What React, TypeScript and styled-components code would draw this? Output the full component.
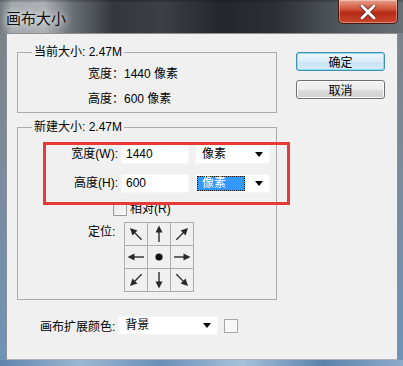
import styled, { createGlobalStyle } from "styled-components";

const Global = createGlobalStyle`
  html, body { margin: 0; padding: 0; background: #6f8fb2; }
  body { font-family: "Liberation Sans", "Noto Sans CJK SC", sans-serif; font-size: 12px; color: #000; }
  * { box-sizing: border-box; }
`;

const Window = styled.div`
  position: relative;
  width: 403px;
  height: 366px;
  display: flex;
  flex-direction: column;
  overflow: hidden;
`;

const TitleBar = styled.div`
  height: 33px;
  display: flex;
  justify-content: space-between;
  align-items: flex-start;
  background:
    linear-gradient(180deg, rgba(0,0,0,0.25) 0px, rgba(0,0,0,0) 3px),
    linear-gradient(90deg, #73797f 0%, #a4a9ad 3%, #adb1b5 11%, #6a6f74 18%, #34383c 28%, #3c4044 40%, #24282c 55%, #2b2f33 68%, #4d5257 82%, #6b7076 100%);
`;

const Title = styled.div`
  padding: 9px 0 0 6px;
  font-family: "Noto Sans CJK SC", sans-serif;
  font-size: 15px;
  line-height: 18px;
  color: #101010;
  text-shadow: 0 0 6px rgba(255,255,255,0.9), 0 0 10px rgba(255,255,255,0.6);
`;

const CloseButton = styled.div`
  width: 60px;
  height: 24px;
  margin-right: 5px;
  display: flex;
  align-items: center;
  justify-content: center;
  border: 1px solid #4a1a12;
  border-top: none;
  border-radius: 0 0 5px 5px;
  background: linear-gradient(180deg, #e8a08c 0%, #d0523a 40%, #b52a17 55%, #c9492c 100%);
  box-shadow: inset 0 0 0 1px rgba(255,255,255,0.35);
`;

const Frame = styled.div`
  flex: 1;
  display: flex;
`;

const SideBorder = styled.div<{ $w: number }>`
  width: ${(p) => p.$w}px;
  background: linear-gradient(180deg, #7c8289 0%, #7b8a9a 40%, #6f93b8 100%);
`;

const BottomBorder = styled.div`
  height: 6px;
  background: linear-gradient(90deg, #5f84ad 0%, #9db7d2 20%, #6a8fb6 40%, #a7c1da 60%, #5c82ab 80%, #8eaacb 100%);
`;

const Body = styled.div`
  flex: 1;
  display: flex;
  background: #f0f0f0;
  border: 1px solid #8a9096;
  border-bottom-color: #a9b3bd;
  padding: 10px 12px 0 10px;
`;

const LeftColumn = styled.div`
  width: 260px;
  display: flex;
  flex-direction: column;
`;

const RightColumn = styled.div`
  margin-left: 19px;
  padding-top: 8px;
  display: flex;
  flex-direction: column;
  gap: 9px;
`;

const Group = styled.fieldset<{ $gap?: number }>`
  margin: 0;
  margin-top: ${(p) => p.$gap ?? 0}px;
  padding: 0;
  border: 1px solid #acacac;
  min-width: 0;
`;

const Caption = styled.legend`
  margin-left: 14px;
  padding: 0 2px;
  line-height: 16px;
  font-size: 12px;
`;

const InfoList = styled.div`
  padding: 6px 0 5px 70px;
  display: flex;
  flex-direction: column;
  gap: 9px;
`;

const InfoLine = styled.div`
  line-height: 16px;
`;

const FieldGrid = styled.div`
  padding-top: 10px;
  display: grid;
  grid-template-columns: 100px 68px 75px;
  column-gap: 3px;
  row-gap: 10px;
  align-items: center;
`;

const FieldLabel = styled.div`
  text-align: right;
  line-height: 19px;
`;

const TextInput = styled.div`
  height: 19px;
  background: #fff;
  border: 1px solid #f6f6f6;
  padding: 0 4px;
  line-height: 17px;
`;

const Select = styled.div<{ $width: number }>`
  width: ${(p) => p.$width}px;
  height: 19px;
  background: #fff;
  border: 1px solid #f4f4f4;
  display: flex;
  align-items: center;
  justify-content: space-between;
  padding: 0 6px 0 1px;
  margin-left: 3px;
`;

const SelectText = styled.span<{ $active?: boolean }>`
  flex: ${(p) => (p.$active ? "0 0 48px" : "1")};
  height: 15px;
  line-height: 13px;
  padding: 0 4px;
  color: ${(p) => (p.$active ? "#fff" : "#000")};
  background: ${(p) => (p.$active ? "#3399ff" : "transparent")};
  border: 1px ${(p) => (p.$active ? "dotted #1a1a1a" : "solid transparent")};
`;

const Caret = styled.span`
  width: 0;
  height: 0;
  border-left: 4.5px solid transparent;
  border-right: 4.5px solid transparent;
  border-top: 5px solid #000;
`;

const CheckRow = styled.div`
  margin: 9px 0 0 95px;
  display: flex;
  align-items: center;
  gap: 3px;
  line-height: 14px;
`;

const CheckBox = styled.div`
  width: 14px;
  height: 14px;
  border: 1px solid #9a9a9a;
  background: linear-gradient(135deg, #e4e4e4, #fbfbfb);
`;

const AnchorRow = styled.div`
  margin: 6px 0 7px 70px;
  display: flex;
  align-items: flex-start;
  gap: 4px;
`;

const AnchorLabel = styled.div`
  width: 32px;
  line-height: 16px;
  padding-top: 2px;
`;

const AnchorGrid = styled.div`
  display: grid;
  grid-template-columns: repeat(3, 22px);
  grid-template-rows: repeat(3, 22px);
  gap: 1px;
  padding: 1px;
  background: #acacac;
`;

const AnchorCell = styled.div`
  background: #f0f0f0;
  display: flex;
  align-items: center;
  justify-content: center;
`;

const CanvasRow = styled.div`
  margin: 16px 0 0 23px;
  display: flex;
  align-items: center;
`;

const Swatch = styled.div`
  width: 14px;
  height: 14px;
  margin-left: 6px;
  border: 1px solid #a8a8a8;
  background: #f7f7f7;
`;

const Button = styled.div<{ $primary?: boolean }>`
  width: 89px;
  height: 19px;
  display: flex;
  align-items: center;
  justify-content: center;
  font-family: "Noto Sans CJK SC", sans-serif;
  font-size: 12px;
  border-radius: 3px;
  border: 1px solid ${(p) => (p.$primary ? "#3c8fb8" : "#707070")};
  background: ${(p) =>
    p.$primary
      ? "linear-gradient(180deg, #eef7fd 0%, #dcecf8 50%, #c9e3f5 51%, #d7ecfa 100%)"
      : "linear-gradient(180deg, #f3f3f3 0%, #ebebeb 50%, #dddddd 51%, #d0d0d0 100%)"};
  box-shadow: inset 0 0 0 1px ${(p) => (p.$primary ? "#8fdcf5" : "#fcfcfc")};
`;

const Annotation = styled.div`
  position: absolute;
  left: 43px;
  top: 142px;
  width: 247px;
  height: 63px;
  border: 3px solid #e53a36;
  pointer-events: none;
`;

const Arrow = ({ angle }: { angle: number }) => (
  <svg width="22" height="22" viewBox="0 0 22 22">
    <g transform={`rotate(${angle} 11 11)`}>
      <line x1="3" y1="11" x2="14" y2="11" stroke="#2a2a2a" strokeWidth="1.4" />
      <polygon points="12.5,7.5 19.5,11 12.5,14.5" fill="#2a2a2a" />
    </g>
  </svg>
);

const Dot = () => (
  <svg width="22" height="22" viewBox="0 0 22 22">
    <circle cx="11" cy="11" r="3.6" fill="#111" />
  </svg>
);

const anchors: (number | null)[] = [225, 270, 315, 180, null, 0, 135, 90, 45];

export default function App() {
  return (
    <Window>
      <Global />
      <TitleBar>
        <Title>画布大小</Title>
        <CloseButton>
          <svg width="18" height="14" viewBox="0 0 18 14">
            <path d="M3 1 L15 13 M15 1 L3 13" stroke="#5a1a10" strokeWidth="4.4" strokeLinecap="round" />
            <path d="M3 1 L15 13 M15 1 L3 13" stroke="#fff" strokeWidth="3" strokeLinecap="round" />
          </svg>
        </CloseButton>
      </TitleBar>
      <Frame>
        <SideBorder $w={6} />
        <Body>
          <LeftColumn>
            <Group>
              <Caption>当前大小: 2.47M</Caption>
              <InfoList>
                <InfoLine>宽度：1440 像素</InfoLine>
                <InfoLine>高度：600 像素</InfoLine>
              </InfoList>
            </Group>
            <Group $gap={6}>
              <Caption>新建大小: 2.47M</Caption>
              <FieldGrid>
                <FieldLabel>宽度(W):</FieldLabel>
                <TextInput>1440</TextInput>
                <Select $width={75}>
                  <SelectText>像素</SelectText>
                  <Caret />
                </Select>
                <FieldLabel>高度(H):</FieldLabel>
                <TextInput>600</TextInput>
                <Select $width={75}>
                  <SelectText $active>像素</SelectText>
                  <Caret />
                </Select>
              </FieldGrid>
              <CheckRow>
                <CheckBox />
                <span>相对(R)</span>
              </CheckRow>
              <AnchorRow>
                <AnchorLabel>定位:</AnchorLabel>
                <AnchorGrid>
                  {anchors.map((a, i) => (
                    <AnchorCell key={i}>{a === null ? <Dot /> : <Arrow angle={a} />}</AnchorCell>
                  ))}
                </AnchorGrid>
              </AnchorRow>
            </Group>
            <CanvasRow>
              <span>画布扩展颜色:</span>
              <Select $width={100}>
                <SelectText>背景</SelectText>
                <Caret />
              </Select>
              <Swatch />
            </CanvasRow>
          </LeftColumn>
          <RightColumn>
            <Button $primary>确定</Button>
            <Button>取消</Button>
          </RightColumn>
        </Body>
        <SideBorder $w={5} />
      </Frame>
      <BottomBorder />
      <Annotation />
    </Window>
  );
}
